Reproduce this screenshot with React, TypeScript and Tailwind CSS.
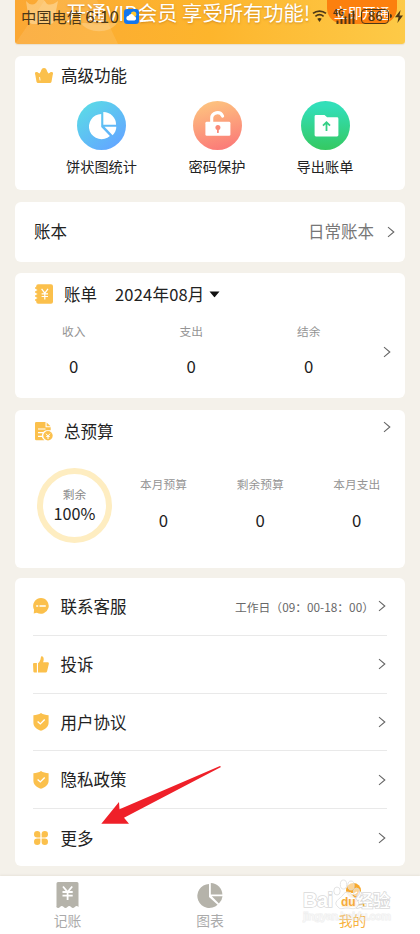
import type { ReactNode } from "react";

const premium = [
  { label: "饼状图统计", icon: <PieBadge />, width: "w-[73px]" },
  { label: "密码保护", icon: <LockBadge />, width: "w-[58px]" },
  { label: "导出账单", icon: <FolderBadge />, width: "w-[58px]" },
];

const menu = [
  { label: "联系客服", icon: <ChatIcon />, note: "工作日（09：00-18：00）" },
  { label: "投诉", icon: <ThumbIcon /> },
  { label: "用户协议", icon: <ShieldIcon /> },
  { label: "隐私政策", icon: <ShieldIcon /> },
  { label: "更多", icon: <GridIcon /> },
];

function Chevron() {
  return (
    <svg width="8" height="12" viewBox="0 0 8 12" fill="none" className="shrink-0">
      <path d="M1 1.2 6.8 6 1 10.8" stroke="#666" strokeWidth="1.1" />
    </svg>
  );
}

function CrownIcon() {
  return (
    <svg width="18" height="16" viewBox="0 0 18 16" fill="#fbc04c">
      <circle cx="9" cy="2.6" r="2.6" />
      <circle cx="1.4" cy="5.3" r="1.4" />
      <circle cx="16.6" cy="5.3" r="1.4" />
      <path d="M.1 5.8 1.8 4 4.6 5.4 6.6 2h4.8l2 3.400L16.200 4l1.700 1.800-1.400 7.900a1.700 1.700 0 0 1-1.700 1.400H3.200a1.700 1.700 0 0 1-1.700-1.400Z" />
      <path d="m4.6 9.500.4 2.500" stroke="#fff" strokeWidth=".9" strokeLinecap="round" />
    </svg>
  );
}

function PieBadge() {
  return (
    <svg width="49" height="49" viewBox="0 0 49 49">
      <defs>
        <linearGradient id="pie" x1="0.15" y1="0.1" x2="0.8" y2="0.9">
          <stop offset="0" stopColor="#5bd8e8" />
          <stop offset="1" stopColor="#62a8ff" />
        </linearGradient>
      </defs>
      <circle cx="24.5" cy="24.5" r="24.5" fill="url(#pie)" />
      <path d="M24.2 13v13l8.7 9A12.6 12.6 0 1 1 24.2 13Z" fill="#fff" />
      <path d="M26.3 11a12.8 12.8 0 0 1 12.8 12.8H26.3Z" fill="#fff" />
      <path d="M27.5 25.8h11.8a11.5 11.5 0 0 1-3.7 8.4Z" fill="#fff" />
    </svg>
  );
}

function LockBadge() {
  return (
    <svg width="49" height="49" viewBox="0 0 49 49">
      <defs>
        <linearGradient id="lock" x1="0.35" y1="0" x2="0.6" y2="1">
          <stop offset="0" stopColor="#fdc37f" />
          <stop offset="1" stopColor="#fb7a78" />
        </linearGradient>
      </defs>
      <circle cx="24.5" cy="24.5" r="24.5" fill="url(#lock)" />
      <path d="M18.7 21.5v-4a5.700 5.700 0 0 1 10.900-2.400" fill="none" stroke="#fff" strokeWidth="3.1" strokeLinecap="round" />
      <rect x="12.4" y="20.8" width="25" height="14" rx="1.4" fill="#fff" />
      <circle cx="24.9" cy="26.4" r="2.5" fill="#f98a78" />
      <path d="M24.9 27v4.2" stroke="#f98a78" strokeWidth="1.8" strokeLinecap="round" />
    </svg>
  );
}

function FolderBadge() {
  return (
    <svg width="49" height="49" viewBox="0 0 49 49">
      <defs>
        <linearGradient id="folder" x1="0.5" y1="0" x2="0.5" y2="1">
          <stop offset="0.1" stopColor="#32dfb9" />
          <stop offset="1" stopColor="#35c961" />
        </linearGradient>
      </defs>
      <circle cx="24.5" cy="24.5" r="24.5" fill="url(#folder)" />
      <path d="M15 14h8.5l2.600 2.300H36a1.400 1.400 0 0 1 1.400 1.400V34a1.400 1.400 0 0 1-1.400 1.400H15a1.400 1.400 0 0 1-1.400-1.400V15.400A1.400 1.400 0 0 1 15 14Z" fill="#fff" />
      <path d="M25.5 30v-8M22 24.7l3.5-3.5 3.5 3.5" stroke="#34cf85" strokeWidth="1.8" fill="none" />
    </svg>
  );
}

function BillIcon() {
  return (
    <svg width="18" height="20" viewBox="0 0 18 20">
      <rect x="1.2" y="0.3" width="16.8" height="19.4" rx="2" fill="#fbc04c" />
      <path d="M0 4h2.4M0 8h2.4M0 12h2.4M0 16h2.4" stroke="#fbc04c" strokeWidth="1.6" />
      <path d="M1 6h1.2M1 10h1.2M1 14h1.2" stroke="#fff" strokeWidth="1" />
      <path d="m6.6 4.8 3.2 4.400 3.200-4.400M9.800 9.200v6.200M6.600 9.800H13M6.600 12.500H13" stroke="#fff" strokeWidth="1.2" fill="none" />
    </svg>
  );
}

function BudgetIcon() {
  return (
    <svg width="18" height="19" viewBox="0 0 18 19">
      <path d="M1.2 0H10.5v5.3h5.2v3H13a5.4 5.4 0 0 0-3.6 9.9H1.2A1.2 1.2 0 0 1 0 17V1.2A1.2 1.2 0 0 1 1.2 0Z" fill="#fbc04c" />
      <path d="m11.6.4 4 3.9h-4Z" fill="#fbc04c" />
      <path d="M3 7h7.5M3 10.7h6M3 14.3h4.5" stroke="#fff" strokeWidth="1.2" />
      <circle cx="13" cy="13.8" r="4.7" fill="#fbc04c" />
      <path d="m11 11.7 2 2.3 2-2.3M13 14v3M11.2 14.4h3.6" stroke="#fff" strokeWidth="1" fill="none" />
    </svg>
  );
}

function ChatIcon() {
  return (
    <svg width="16" height="16" viewBox="0 0 16 16">
      <path d="M8 0a7.9 7.9 0 1 1-4.2 14.7L.7 15.6l.4-3.9A7.9 7.9 0 0 1 8 0Z" fill="#fbc04c" />
      <path d="M3.7 8h1M7 8h5.3" stroke="#fff" strokeWidth="1.4" strokeLinecap="round" />
    </svg>
  );
}

function ThumbIcon() {
  return (
    <svg width="16" height="17" viewBox="0 0 16 17" fill="#fbc04c">
      <path d="M1 7h2.9v9.6H1.4a1 1 0 0 1-1-.8L0 8a1 1 0 0 1 1-1Z" />
      <path d="M5 16.6V7.2c1.7-1 2.4-3 2.8-5.5C8 .4 8.7 0 9.5.4c1.5.8 1.5 3.6.6 5.8h4.3c1.1 0 1.7.8 1.4 1.9l-1.7 7.2a1.6 1.6 0 0 1-1.6 1.3Z" />
    </svg>
  );
}

function ShieldIcon() {
  return (
    <svg width="16" height="18" viewBox="0 0 16 18">
      <path d="M8 0c2 1.4 4.7 2.1 7.6 2.2v7.5c0 4.3-3.5 6.5-7.6 8.1-4.1-1.6-7.6-3.8-7.6-8.1V2.2C3.3 2.1 6 1.4 8 0Z" fill="#fbc04c" />
      <path d="m4.6 8.4 2.7 2.5 4.4-4.4" stroke="#fff" strokeWidth="1.4" fill="none" />
    </svg>
  );
}

function GridIcon() {
  return (
    <svg width="16" height="16" viewBox="0 0 16 16" fill="#fbc04c">
      <path d="M4.2 1a3.2 3.2 0 0 1 3.2 3.2v3.2H4.2A3.2 3.2 0 0 1 4.2 1Z" />
      <path d="M11.8 1a3.2 3.2 0 0 1 0 6.4H8.6V4.2A3.2 3.2 0 0 1 11.8 1Z" />
      <path d="M4.2 8.6h3.2v3.2a3.2 3.2 0 1 1-3.2-3.2Z" />
      <path d="M8.6 8.6h3.2a3.2 3.2 0 1 1-3.2 3.2Z" />
    </svg>
  );
}

function Card({ className, children }: { className: string; children: ReactNode }) {
  return <section className={`shrink-0 rounded-md bg-white ${className}`}>{children}</section>;
}

function Stat({ label, value, className }: { label: string; value: string; className: string }) {
  return (
    <div className={`flex flex-col items-center ${className}`}>
      <span className="text-[11.7px] leading-4 text-[#949494]">{label}</span>
      <span className="text-[16.8px] leading-5 text-[#1c1c1c]">{value}</span>
    </div>
  );
}

function StatusBar() {
  return (
    <div className="absolute inset-x-0 top-0 z-10 flex h-8 items-center pl-[21px] text-[#4b3717]">
      <span className="text-[15.3px] leading-8 whitespace-nowrap">中国电信</span>
      <span className="ml-[3px] w-9 text-[17px] leading-8 tracking-[0.2px]">6:10</span>
      <svg width="15" height="15" viewBox="0 0 15 15" className="ml-[3px]">
        <rect width="15" height="15" rx="3.2" fill="#1276ee" />
        <circle cx="9.6" cy="5.2" r="2.7" fill="#ffc933" />
        <path d="M4.8 11.5a2.4 2.4 0 0 1-.2-4.8 3 3 0 0 1 5.600.5 2.200 2.200 0 0 1 .3 4.300Z" fill="#fff" />
      </svg>
      <svg width="16" height="14" viewBox="0 0 16 14" fill="none" stroke="#4b3717" className="ml-[173px]">
        <path d="M1 4.4a10.2 10.2 0 0 1 13 0M3.4 7.3a6.5 6.5 0 0 1 8.2 0" strokeWidth="1.7" />
        <path d="M5.3 9.8a3.9 3.9 0 0 1 4.4 0L7.5 13Z" fill="#4b3717" stroke="none" />
      </svg>
      <svg width="23" height="17" viewBox="0 0 23 17" fill="#4b3717" className="ml-[5px]">
        <text x="0" y="8" fontSize="8.5" fontWeight="700">4G</text>
        <path d="M3.5 12.5h2V16h-2zM7.5 11h2v5h-2zM11.5 8.5h2V16h-2zM15.5 5.5h2V16h-2zM19.5 2.5h2V16h-2z" />
      </svg>
      <div className="ml-[5px] flex h-[15px] w-[28px] items-center justify-center rounded-[4px] border-[1.5px] border-[#4b3717] text-[13px] font-medium">
        86
      </div>
      <div className="ml-px h-1 w-0.5 rounded-r bg-[#4b3717]" />
      <svg width="8" height="13" viewBox="0 0 8 13" fill="#4b3717" className="ml-[3px]">
        <path d="M5.6 0 0 7.2h3.5L2.4 13 8 5.6H4.5Z" />
      </svg>
    </div>
  );
}

function Banner() {
  return (
    <div className="relative flex h-11 shrink-0 rounded-b-[3px] bg-linear-to-r from-[#fba834] via-[#fdb52c] to-[#fdca47] text-white shadow-[0_1px_1px_#e8dfcf]">
      <svg width="110" height="44" viewBox="0 0 110 44" className="absolute top-0 left-0">
        <path d="M0 44 30 0h52l21 44Z" fill="#fff" opacity=".1" />
        <path d="M11 1q5 6 10 2l5-7 6 8q5 2 11-3l-4 20a4 4 0 0 1-4 3H18a4 4 0 0 1-4-3Z" fill="#fff0cd" opacity=".4" />
        <path d="M66 23c7 11 29 11 36 0Z" fill="#fff" opacity=".22" />
      </svg>
      <span className="relative ml-[51px] text-[20.3px] leading-6 whitespace-nowrap [text-shadow:0_1px_2px_rgba(169,99,15,.5)]">
        开通VIP会员 享受所有功能!
      </span>
      <div className="absolute top-0 right-[8px] flex h-6 w-[70px] items-center justify-center rounded-b-2xl bg-[#fc800e] text-[14px] leading-6">
        立即开通
      </div>
    </div>
  );
}

function TabBar() {
  return (
    <nav className="mt-[9.5px] grid h-[59px] grid-cols-[135px_150px_135px] bg-white text-[13.8px] leading-5 text-[#aaa] shadow-[0_-1px_2px_#e8e3db]">
      <div className="flex flex-col items-center pt-[6px]">
        <svg width="24" height="27" viewBox="0 0 24 27">
          <path d="M2 0h19a1.500 1.500 0 0 1 1.500 1.500V25q-1.900-2-3.700 0-1.900 2-3.700 0-1.900-2-3.700 0-1.900 2-3.700 0-1.900-2-3.700 0-1.900 2-3.700 0L.5 24V1.500A1.500 1.500 0 0 1 2 0Z" fill="#b5b3aa" />
          <path d="m7 4.5 4.6 5.5 4.6-5.5M11.6 10v8M6.500 10h10.200M6.500 13.700h10.200" fill="none" stroke="#fff" strokeWidth="1.8" />
        </svg>
        <span className="mt-px">记账</span>
      </div>
      <div className="flex flex-col items-center pt-[6px]">
        <svg width="26" height="27" viewBox="0 0 26 27" fill="#b5b3aa">
          <path d="M12 2v13l8.6 7.7A12 12 0 1 1 12 2Z" />
          <path d="M13.8 1A11.8 11.8 0 0 1 25.4 12.5H13.8Z" />
          <path d="M14.8 14.2h10.7a11 11 0 0 1-3.6 7.4Z" />
        </svg>
        <span className="mt-px">图表</span>
      </div>
      <div className="flex flex-col items-center pt-[6px] text-[#f8b23d]">
        <svg width="26" height="27" viewBox="0 0 26 27" fill="#f8a92c">
          <circle cx="13.5" cy="8.5" r="7.5" />
          <path d="M1.5 25q0-8 8-8h7q8 0 8 8Z" />
          <path d="M9.5 10.5q4 3 7.5-.5" stroke="#fff" strokeWidth="1.5" fill="none" />
        </svg>
        <span className="mt-px">我的</span>
      </div>
    </nav>
  );
}

function Watermark() {
  return (
    <svg width="94" height="46" viewBox="0 0 94 46" className="absolute top-[878px] left-[302px]">
      <text x="1" y="42" fontSize="11" fontWeight="700" fontFamily="Liberation Sans" textLength="88" fill="#fff" fillOpacity=".3" stroke="#ddd" strokeWidth="1" paintOrder="stroke" opacity=".45">
        jingyan.baidu.com
      </text>
      <g fill="#fff" stroke="#d8d8d8" strokeWidth="1.5" paintOrder="stroke">
        <text x="1" y="29" fontSize="20" fontWeight="700" fontFamily="Liberation Sans" textLength="30">Bai</text>
        <text x="54" y="29" fontSize="17" fontWeight="500" textLength="34">经验</text>
      </g>
      <g fill="#fff" fillOpacity=".85" stroke="#dcdcdc" strokeWidth=".8">
        <ellipse cx="35" cy="13" rx="3.2" ry="4" />
        <ellipse cx="41.5" cy="6.5" rx="3.2" ry="4.5" />
        <ellipse cx="49" cy="7.5" rx="3.2" ry="4.5" fillOpacity=".5" />
        <ellipse cx="54.5" cy="14" rx="3.2" ry="4" fillOpacity=".5" />
        <path d="M36 29c-6-5 2-8 5-12 2-4 7-4 9 0 3 4 10 7 5 12-3 3-6 1-10 1s-7 2-9-1Z" />
      </g>
      <text x="39" y="28" fontSize="12" fontWeight="700" fontFamily="Liberation Sans" fill="#f5ab3b">du</text>
    </svg>
  );
}

export default function App() {
  return (
    <div className="relative h-[934px] w-[420px] overflow-hidden bg-[#f4f1ea] font-['Noto_Sans_CJK_SC',sans-serif] text-[#222]">
      <StatusBar />
      <main className="flex h-[866px] flex-col px-[15px]">
        <Banner />

        <Card className="mt-3 h-[134px]">
          <div className="flex h-[39px] items-center gap-2 pl-5">
            <CrownIcon />
            <h2 className="text-[16.5px]">高级功能</h2>
          </div>
          <div className="flex pt-[6px] pl-[50px]">
            {premium.map((item, i) => (
              <div key={item.label} className={`flex flex-col items-center ${item.width} ${i > 0 ? "ml-[50px]" : ""}`}>
                {item.icon}
                <span className="mt-[6px] text-[14.2px] leading-5 whitespace-nowrap">{item.label}</span>
              </div>
            ))}
          </div>
        </Card>

        <Card className="mt-3 flex h-[59.5px] items-center pr-[10px] pl-[19px] text-[16.5px]">
          <span>账本</span>
          <span className="mr-[13px] ml-auto text-[#777]">日常账本</span>
          <Chevron />
        </Card>

        <Card className="mt-[11.9px] h-[125px]">
          <div className="flex h-[42px] items-center pl-5 text-[16.5px]">
            <BillIcon />
            <h2 className="ml-[11px]">账单</h2>
            <span className="ml-[18px] tracking-[0.2px]">2024年08月</span>
            <svg width="11" height="7" viewBox="0 0 11 7" className="ml-1">
              <path d="M.5.5h10L6.3 5.6a1 1 0 0 1-1.6 0Z" fill="#111" />
            </svg>
          </div>
          <div className="flex pr-[14px]">
            <Stat label="收入" value="0" className="mt-2 w-[117.5px] gap-[16.5px]" />
            <Stat label="支出" value="0" className="mt-2 w-[117.5px] gap-[16.5px]" />
            <Stat label="结余" value="0" className="mt-2 w-[117.5px] gap-[16.5px]" />
            <div className="mt-[31px] ml-auto">
              <Chevron />
            </div>
          </div>
        </Card>

        <Card className="mt-[11.6px] h-[158px]">
          <div className="flex h-[42px] items-center pt-px pr-[14px] pl-5 text-[16.5px]">
            <BudgetIcon />
            <h2 className="ml-[11px]">总预算</h2>
            <div className="mb-[8px] ml-auto">
              <Chevron />
            </div>
          </div>
          <div className="flex pt-4 pl-[22px]">
            <div className="flex h-[75px] w-[75px] flex-col items-center justify-center rounded-full border-[6px] border-[#feedc1] pb-0.5">
              <span className="text-[11.7px] leading-4 text-[#888]">剩余</span>
              <span className="mt-px text-[16.2px] leading-5 text-[#222]">100%</span>
            </div>
            <Stat label="本月预算" value="0" className="mt-2 ml-[3px] w-[97px] gap-[18px]" />
            <Stat label="剩余预算" value="0" className="mt-2 w-[96.5px] gap-[18px]" />
            <Stat label="本月支出" value="0" className="mt-2 w-[96.5px] gap-[18px]" />
          </div>
        </Card>

        <Card className="mt-[10px] h-[288px] pr-[18px] pl-[18px]">
          {menu.map((item) => (
            <div key={item.label} className="flex h-[57.8px] items-center border-b border-[#e9e9e9] last:border-b-0">
              <div className="flex w-[27.5px]">{item.icon}</div>
              <span className="text-[16.5px]">{item.label}</span>
              <span className="ml-auto text-[11.8px] whitespace-nowrap text-[#686868]">{item.note}</span>
              <div className="mr-px ml-1">
                <Chevron />
              </div>
            </div>
          ))}
        </Card>
      </main>
      <TabBar />
      <svg width="122" height="62" viewBox="0 0 122 62" className="absolute top-[764px] left-[100px]">
        <path d="M1.3 59.7 19 38l.5 7.2L120 2l1 1L24 53.7l5 6Z" fill="#ef2029" />
      </svg>
      <Watermark />
    </div>
  );
}
